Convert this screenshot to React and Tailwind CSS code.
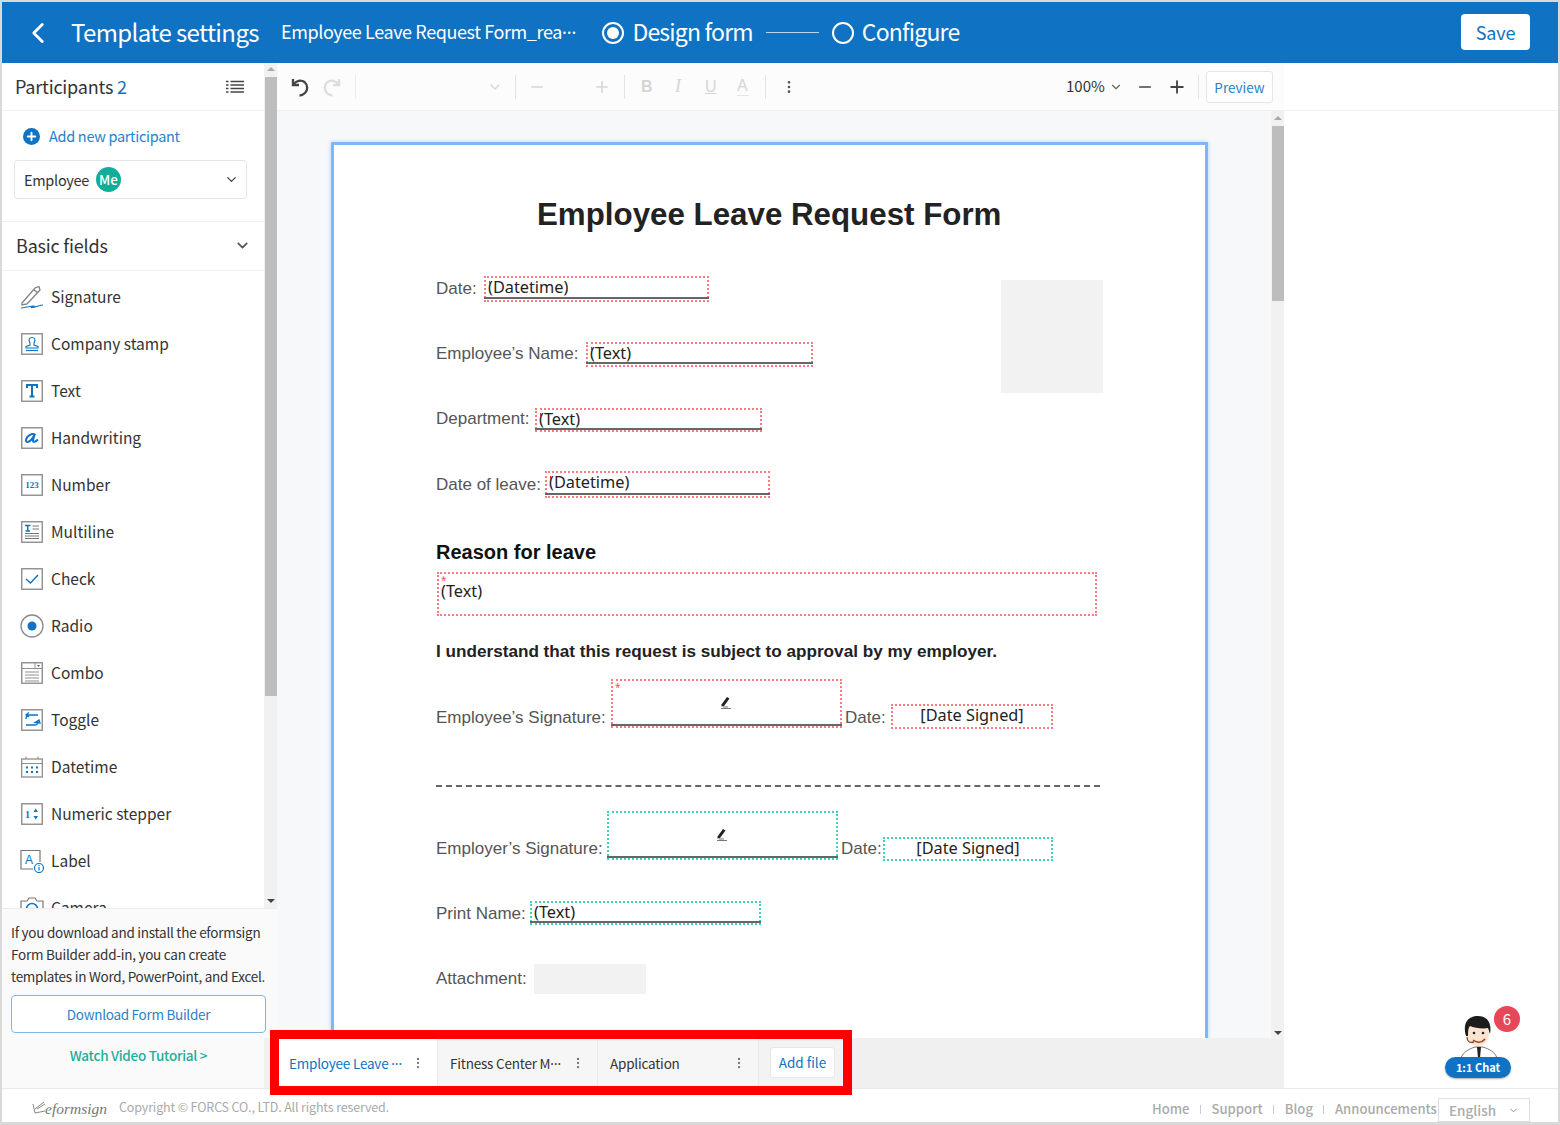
import React from "react";
import { ChevronDown, ChevronLeft, Plus, Minus, EllipsisVertical } from "lucide-react";

const BLUE = "#0f72c2";

function Box({ children, size = 22 }) {
  return (
    <svg width={size} height={size} viewBox="0 0 22 22" fill="none">
      <rect x="0.75" y="0.75" width="20.5" height="20.5" stroke="#8f8f8f" strokeWidth="1.4" />
      {children}
    </svg>
  );
}

const fields = [
  {
    name: "Signature",
    icon: (
      <svg width="24" height="24" viewBox="0 0 24 24" fill="none">
        <path d="M2 18 L15 3 L19 1.500 L20 5 L7 19 L2 20 Z M14 5 L18 8" stroke="#808080" strokeWidth="1.300" />
        <path d="M1 23 C7 22 12 21 14 21 C15 21 9 23 12 22.500 C16 22 20 20 23 20" stroke={BLUE} strokeWidth="1.100" />
      </svg>
    ),
  },
  {
    name: "Company stamp",
    icon: (
      <Box>
        <path d="M9 10 C7 6 8.500 4.500 11 4.500 C13.500 4.500 15 6 13 10 L13 12 L17 13.500 L17 15 L5 15 L5 13.500 L9 12 Z" stroke={BLUE} strokeWidth="1.100" />
        <path d="M5 17.500 L17 17.500" stroke={BLUE} strokeWidth="1.200" />
      </Box>
    ),
  },
  {
    name: "Text",
    icon: (
      <Box>
        <path d="M6 8 L6 5 L16 5 L16 8 M11 5 L11 16.500 M8.500 16.500 L13.500 16.500" stroke={BLUE} strokeWidth="2" />
      </Box>
    ),
  },
  {
    name: "Handwriting",
    icon: (
      <Box>
        <path d="M14.500 8 C11 5.500 5.500 9 5 13 C4.700 16 8 15.500 10.500 12.500 L13.500 8 L12 13 C11.500 15.500 14 15.500 17 12.500" stroke={BLUE} strokeWidth="2" />
      </Box>
    ),
  },
  {
    name: "Number",
    icon: (
      <Box>
        <text x="11" y="14" textAnchor="middle" fontSize="9" fontWeight="700" fontFamily="Liberation Serif, serif" fill={BLUE}>123</text>
      </Box>
    ),
  },
  {
    name: "Multiline",
    icon: (
      <Box>
        <path d="M4 4.500 L9.500 4.500 M6.700 4.500 L6.700 10 M4.500 10 L9 10" stroke={BLUE} strokeWidth="1.500" />
        <path d="M11.500 5 L18 5 M11.500 8 L18 8 M4 12.500 L18 12.500 M4 15 L18 15 M4 17.500 L18 17.500" stroke="#777" strokeWidth="1" />
      </Box>
    ),
  },
  {
    name: "Check",
    icon: (
      <Box>
        <path d="M5 11 L9.500 15 L17 7" stroke={BLUE} strokeWidth="1.400" />
      </Box>
    ),
  },
  {
    name: "Radio",
    icon: (
      <svg width="24" height="24" viewBox="0 0 24 24" fill="none">
        <circle cx="12" cy="12" r="11" stroke="#8a8a8a" strokeWidth="1.300" />
        <circle cx="12" cy="12" r="4.500" fill={BLUE} />
      </svg>
    ),
  },
  {
    name: "Combo",
    icon: (
      <Box>
        <path d="M1 6.500 L21 6.500 M14 1 L14 6.500 M4 10 L18 10 M4 13 L18 13 M4 16 L18 16 M4 19 L18 19" stroke="#8f8f8f" strokeWidth="1" />
        <path d="M16 3 L19 3 L17.500 5 Z" fill={BLUE} />
      </Box>
    ),
  },
  {
    name: "Toggle",
    icon: (
      <Box>
        <path d="M5 10 C5 7 6 6 8 6 L17 6 M8 3.500 L5 6 L8 8" stroke={BLUE} strokeWidth="1.300" />
        <path d="M17 12 C17 15 16 16 14 16 L5 16 M14 13.500 L18 11 L19 14 Z" stroke={BLUE} strokeWidth="1.300" />
      </Box>
    ),
  },
  {
    name: "Datetime",
    icon: (
      <svg width="22" height="22" viewBox="0 0 22 22" fill="none">
        <rect x="0.700" y="3" width="20.600" height="18" stroke="#8f8f8f" strokeWidth="1.300" />
        <path d="M0.700 7.500 L21.300 7.500 M5 0.500 L5 3 M17 0.500 L17 3" stroke="#8f8f8f" strokeWidth="1.100" />
        <path d="M5 11.500 L7 11.500 M10 11.500 L12 11.500 M15 11.500 L17 11.500 M5 16 L7 16 M10 16 L12 16 M15 16 L17 16" stroke={BLUE} strokeWidth="2" />
      </svg>
    ),
  },
  {
    name: "Numeric stepper",
    icon: (
      <Box>
        <text x="6.500" y="15" textAnchor="middle" fontSize="10" fontWeight="700" fontFamily="Liberation Serif, serif" fill={BLUE}>1</text>
        <path d="M12.500 9 L17 9 L14.750 5.500 Z M12.500 13 L17 13 L14.750 16.500 Z" fill={BLUE} />
      </Box>
    ),
  },
  {
    name: "Label",
    icon: (
      <svg width="24" height="24" viewBox="0 0 24 24" fill="none">
        <path d="M20 13 L20 1.500 L1 1.500 L1 20 L13 20" stroke="#777" strokeWidth="1.200" />
        <text x="5" y="15" fontSize="12" fontFamily="Liberation Sans, sans-serif" fill={BLUE}>A</text>
        <circle cx="19" cy="19" r="4.500" stroke={BLUE} strokeWidth="1.200" fill="#fff" />
        <path d="M19 18 L19 21.500 M19 16 L19 17" stroke={BLUE} strokeWidth="1.200" />
      </svg>
    ),
  },
];

function Pen({ className }) {
  return (
    <svg className={className} width="14" height="14" viewBox="0 0 14 14" fill="none">
      <path d="M2.500 8.500 L8 1 L10.500 2.500 L5 10 L2.500 10.500 Z" fill="#222" />
      <path d="M2 12.500 L12 12.500 M4 11 L9 11" stroke="#777" strokeWidth="1.200" />
    </svg>
  );
}

function Label({ x, y, children }) {
  return (
    <div className="absolute whitespace-nowrap [font-family:Liberation_Sans,sans-serif] text-[17px] leading-[22px] text-[#555]" style={{ left: x, top: y }}>
      {children}
    </div>
  );
}

function Field({ x, y, w, h, color = "red", text, center, line, req, mark, pt = 0 }) {
  const border = color === "red" ? "border-[#f97c85]" : "border-[#45cdc0]";
  return (
    <div
      className={`absolute border-2 border-dotted ${border} ${center ? "text-center" : "pl-[2px]"} [font-family:Noto_Sans,sans-serif] text-[16.300px] leading-[18px] text-[#222]`}
      style={{ left: x, top: y, width: w, height: h, paddingTop: pt }}
    >
      {req && <span className="absolute left-[2px] top-[1px] text-[10px] leading-[10px] text-[#f4525f]">*</span>}
      {mark && <span className="absolute left-[3px] top-[3px] h-[4px] w-px bg-[#e02030]" />}
      {text}
      {line && <div className="absolute -left-[2px] -right-[2px] h-[2px] bg-[#666]" style={{ top: line }} />}
    </div>
  );
}

function Dots() {
  return <span className="[font-family:Noto_Sans,sans-serif] tracking-normal">···</span>;
}

function Tab({ name, dots, active, w, pl }) {
  return (
    <div className={`flex h-full items-center justify-between pr-[12px] border-r border-[#ececec] ${pl} ${active ? "bg-white text-[#0f72c2]" : "bg-[#f6f6f6] text-[#333]"}`} style={{ width: w }}>
      <span className="whitespace-nowrap pt-[2px] text-[13.500px] tracking-[-0.2px]">{name}{dots && <Dots />}</span>
      <EllipsisVertical size={14} className="text-[#777]" />
    </div>
  );
}

export default function App() {
  return (
    <div className="relative h-[1125px] w-[1560px] overflow-hidden bg-white [font-family:Noto_Sans_CJK_KR,Noto_Sans,sans-serif] text-[#333]">
      {/* header */}
      <div className="absolute left-[2px] right-0 top-[2px] flex h-[61px] items-center bg-[#0f72c2] text-white">
        <ChevronLeft size={34} strokeWidth={2} className="ml-[19px]" />
        <span className="mb-[2px] ml-[16px] text-[24px] leading-none tracking-[-0.6px]">Template settings</span>
        <span className="mb-[2px] ml-[22px] text-[18px] leading-none tracking-[-0.4px]">Employee Leave Request Form_rea<Dots /></span>
        <span className="ml-[26px] flex h-[22px] w-[22px] items-center justify-center rounded-full border-2 border-white">
          <span className="h-[12px] w-[12px] rounded-full bg-white" />
        </span>
        <span className="mb-[2px] ml-[8px] text-[23px] leading-none tracking-[-0.8px]">Design form</span>
        <span className="ml-[13px] h-px w-[53px] bg-[#b9d8f0]" />
        <span className="ml-[13px] h-[22px] w-[22px] rounded-full border-2 border-white" />
        <span className="mb-[2px] ml-[8px] text-[23px] leading-none tracking-[-0.8px]">Configure</span>
        <button className="absolute left-[1459px] top-[12px] h-[36px] w-[69px] rounded-[4px] bg-white text-[18px] tracking-[-0.2px] text-[#0f72c2]">Save</button>
      </div>

      {/* sidebar */}
      <div className="absolute left-[2px] top-[63px] h-[846px] w-[262px] overflow-hidden bg-white">
        <div className="flex h-[48px] items-center justify-between border-b border-[#efefef] pl-[13px] pr-[20px]">
          <span className="text-[18px] tracking-[-0.2px]">Participants <span className="text-[#0f72c2]">2</span></span>
          <svg width="18" height="14" viewBox="0 0 18 14" fill="none" stroke="#444" strokeWidth="1.600">
            <path d="M0 1.500 L2.500 1.500 M0 5 L2.500 5 M0 8.500 L2.500 8.500 M0 12 L2.500 12 M4.500 1.500 L18 1.500 M4.500 5 L18 5 M4.500 8.500 L18 8.500 M4.500 12 L18 12" />
          </svg>
        </div>
        <div className="mt-[15px] flex items-center pl-[21px]">
          <span className="flex h-[17px] w-[17px] items-center justify-center rounded-full bg-[#0f72c2] text-white">
            <Plus size={13} strokeWidth={3.500} />
          </span>
          <span className="ml-[9px] text-[14.500px] leading-[20px] tracking-[-0.3px] text-[#2a7fc9]">Add new participant</span>
        </div>
        <div className="relative ml-[12px] mt-[14px] flex h-[39px] w-[233px] items-center rounded-[3px] border border-[#e6e6e6] pl-[9px]">
          <span className="text-[14.500px] tracking-[-0.3px]">Employee</span>
          <span className="ml-[7px] flex h-[25px] w-[25px] items-center justify-center rounded-full bg-[#10ae98] text-[13.500px] font-medium text-white">Me</span>
          <ChevronDown size={15} className="absolute right-[7px] top-[11px] text-[#444]" />
        </div>
        <div className="mt-[22px] flex h-[50px] items-center justify-between border-y border-[#efefef] pb-[2px] pl-[14px] pr-[13px]">
          <span className="text-[18px] tracking-[-0.2px]">Basic fields</span>
          <ChevronDown size={17} strokeWidth={2.400} className="text-[#555]" />
        </div>
        <div className="flex flex-col pl-[18px] pt-[2px]">
          {fields.map((f) => (
            <div key={f.name} className="flex h-[47px] items-center">
              <span className="flex w-[24px] justify-center">{f.icon}</span>
              <span className="ml-[7px] text-[15.500px] text-[#333]">{f.name}</span>
            </div>
          ))}
          <div className="flex h-[47px] items-center">
            <svg width="24" height="24" viewBox="0 0 24 24" fill="none">
              <path d="M1 23 L1 5 L7 5 L9 2 L15 2 L17 5 L23 5 L23 23 Z" stroke="#777" strokeWidth="1.200" />
              <circle cx="12" cy="13" r="5.500" stroke={BLUE} strokeWidth="1.500" />
            </svg>
            <span className="ml-[7px] text-[15.500px] text-[#333]">Camera</span>
          </div>
        </div>
      </div>

      {/* sidebar scrollbar */}
      <div className="absolute left-[264px] top-[63px] h-[845px] w-[13px] bg-[#f1f1f1]">
        <div className="absolute left-[1px] top-[14px] h-[619px] w-[12px] bg-[#bdbdbd]" />
        <div className="absolute left-[3px] top-[4px] h-0 w-0 border-x-[4px] border-b-[4px] border-x-transparent border-b-[#aaa]" />
        <div className="absolute bottom-[5px] left-[3px] h-0 w-0 border-x-[4px] border-t-[4px] border-x-transparent border-t-[#444]" />
      </div>

      {/* form builder promo */}
      <div className="absolute left-[2px] top-[908px] h-[180px] w-[277px] border-t border-[#ececec] bg-[#fafafa]">
        <p className="whitespace-nowrap pl-[9px] pt-[12px] text-[13.500px] leading-[22px] tracking-[-0.25px] text-[#333]">
          If you download and install the eformsign<br />Form Builder add-in, you can create<br />templates in Word, PowerPoint, and Excel.
        </p>
        <button className="absolute left-[9px] top-[86px] h-[38px] w-[255px] rounded-[4px] border border-[#7db7e8] bg-white text-[13.500px] tracking-[-0.28px] text-[#2a7fc9]">Download Form Builder</button>
        <div className="absolute left-0 top-[136px] w-[273px] text-center text-[13.500px] font-medium tracking-[-0.28px] text-[#1fae9a]">Watch Video Tutorial &gt;</div>
      </div>

      {/* toolbar */}
      <div className="absolute left-[277px] top-[63px] flex h-[48px] w-[1007px] items-center border-b border-[#efefef] bg-[#fcfcfc]">
        <svg className="ml-[12px]" width="22" height="22" viewBox="0 0 22 22" fill="none" stroke="#444" strokeWidth="2.300">
          <path d="M4 3 L4 9 L10 9" />
          <path d="M4.500 8.500 C7 4.500 12 3.500 15.500 6 C19 9 19 14 16 17 C14.500 18.500 12.500 19.500 10.500 19.500" />
        </svg>
        <svg className="ml-[10px]" width="22" height="22" viewBox="0 0 22 22" fill="none" stroke="#ddd" strokeWidth="2.300">
          <path d="M18 3 L18 9 L12 9" />
          <path d="M17.500 8.500 C15 4.500 10 3.500 6.500 6 C3 9 3 14 6 17 C7.500 18.500 9.500 19.500 11.500 19.500" />
        </svg>
        <span className="ml-[12px] h-[24px] w-px bg-[#eee]" />
        <ChevronDown size={16} className="ml-[131px] text-[#d5d5d5]" />
        <span className="ml-[12px] h-[24px] w-px bg-[#e4e4e4]" />
        <Minus size={18} className="ml-[12px] text-[#d5d5d5]" />
        <Plus size={18} className="ml-[47px] text-[#d5d5d5]" />
        <span className="ml-[13px] h-[24px] w-px bg-[#e4e4e4]" />
        <span className="ml-[16px] w-[12px] [font-family:Liberation_Sans,sans-serif] text-[16px] font-bold text-[#d5d5d5]">B</span>
        <span className="ml-[22px] w-[8px] [font-family:Liberation_Serif,serif] text-[18px] italic text-[#d5d5d5]">I</span>
        <span className="ml-[22px] w-[12px] [font-family:Liberation_Sans,sans-serif] text-[16px] text-[#d5d5d5] underline">U</span>
        <span className="ml-[20px] w-[12px] border-b border-[#e4e4e4] [font-family:Liberation_Sans,sans-serif] text-[16px] leading-[18px] text-[#d5d5d5]">A</span>
        <span className="ml-[16px] h-[24px] w-px bg-[#e4e4e4]" />
        <EllipsisVertical size={16} className="ml-[15px] text-[#555]" />
        <span className="absolute left-[789px] text-[15px] text-[#333]">100%</span>
        <ChevronDown size={14} className="absolute left-[832px] top-[17px] text-[#666]" />
        <Minus size={18} strokeWidth={2.200} className="absolute left-[859px] top-[15px] text-[#444]" />
        <Plus size={20} strokeWidth={2.200} className="absolute left-[890px] top-[14px] text-[#444]" />
        <span className="absolute left-[921px] top-[12px] h-[24px] w-px bg-[#e4e4e4]" />
        <button className="absolute left-[929px] top-[8px] h-[32px] w-[67px] rounded-[3px] border border-[#e6e6e6] bg-white text-[13.500px] text-[#2a7fc9]">Preview</button>
      </div>
      <div className="absolute left-[1284px] top-[110px] h-px w-[276px] bg-[#f0f0f0]" />

      {/* canvas */}
      <div className="absolute left-[277px] top-[111px] h-[927px] w-[994px] overflow-hidden bg-[#f7f8fa]">
        <div className="absolute left-[54px] top-[31px] h-[1000px] w-[877px] border-[3px] border-b-0 border-[#7ab8fb] bg-white shadow-[0_0_4px_#a9d2ff]" />
      </div>
      <div className="absolute left-[1271px] top-[111px] h-[927px] w-[13px] bg-[#f1f1f1]">
        <div className="absolute left-[1px] top-[15px] h-[175px] w-[12px] bg-[#bdbdbd]" />
        <div className="absolute left-[3px] top-[5px] h-0 w-0 border-x-[4px] border-b-[4px] border-x-transparent border-b-[#aaa]" />
        <div className="absolute bottom-[3px] left-[3px] h-0 w-0 border-x-[4px] border-t-[4px] border-x-transparent border-t-[#444]" />
      </div>

      {/* form */}
      <div className="absolute left-0 top-0 h-[1038px] w-[1270px] overflow-hidden">
        <h1 className="absolute left-[537px] top-[196px] whitespace-nowrap [font-family:Liberation_Sans,sans-serif] text-[31.300px] font-bold leading-[38px] text-[#222]">Employee Leave Request Form</h1>

        <Label x={436} y={278}>Date:</Label>
        <Field x={484} y={276} w={225} h={26} text="(Datetime)" line={19} mark />
        <Label x={436} y={343}>Employee’s Name:</Label>
        <Field x={586} y={342} w={227} h={25} text="(Text)" line={18} mark />
        <Label x={436} y={408}>Department:</Label>
        <Field x={535} y={408} w={227} h={24} text="(Text)" line={18} mark />
        <Label x={436} y={474}>Date of leave:</Label>
        <Field x={545} y={471} w={225} h={27} text="(Datetime)" line={20} mark />
        <div className="absolute left-[1001px] top-[280px] h-[113px] w-[102px] bg-[#f2f2f2]" />

        <div className="absolute left-[436px] top-[540px] whitespace-nowrap [font-family:Liberation_Sans,sans-serif] text-[20px] font-bold leading-[24px] text-[#111]">Reason for leave</div>
        <Field x={437} y={572} w={660} h={44} text="(Text)" req pt={8} />
        <div className="absolute left-[436px] top-[640px] whitespace-nowrap [font-family:Liberation_Sans,sans-serif] text-[17.150px] font-bold leading-[22px] text-[#222]">I understand that this request is subject to approval by my employer.</div>

        <Label x={436} y={707}>Employee’s Signature:</Label>
        <Field x={611} y={679} w={231} h={49} req line={43} />
        <Pen className="absolute left-[719px] top-[696px]" />
        <Label x={845} y={707}>Date:</Label>
        <Field x={891} y={704} w={162} h={25} center text="[Date Signed]" />

        <div className="absolute left-[436px] top-[785px] w-[664px] border-t-2 border-dashed border-[#666]" />

        <Label x={436} y={838}>Employer’s Signature:</Label>
        <Field x={607} y={811} w={231} h={49} color="green" line={43} />
        <Pen className="absolute left-[715px] top-[828px]" />
        <Label x={841} y={838}>Date:</Label>
        <Field x={883} y={837} w={170} h={24} color="green" center text="[Date Signed]" />

        <Label x={436} y={903}>Print Name:</Label>
        <Field x={530} y={901} w={231} h={24} color="green" text="(Text)" line={18} />
        <Label x={436} y={968}>Attachment:</Label>
        <div className="absolute left-[534px] top-[964px] h-[30px] w-[112px] bg-[#f2f2f2]" />
      </div>

      {/* footer */}
      <div className="absolute left-[2px] right-0 top-[1088px] h-[35px] border-t border-[#e8e8e8] bg-white">
        <span className="absolute left-[30px] top-[8px] [font-family:Liberation_Serif,serif] text-[15.500px] italic text-[#777]">
          <svg className="mr-[-1px] inline-block align-[-1px]" width="14" height="14" viewBox="0 0 14 14" fill="none" stroke="#888">
            <path d="M1 3 L3 12 L13 10 M3 8 L12 1 M5 8 L13 3" />
          </svg>
          eformsign
        </span>
        <span className="absolute left-[117px] top-[9px] text-[12.500px] leading-[18px] tracking-[-0.15px] text-[#aaa]">Copyright © FORCS CO., LTD. All rights reserved.</span>
        <div className="absolute left-[1150px] top-[10px] flex items-center text-[13.100px] font-medium leading-[20px] text-[#aaa]">
          <span>Home</span>
          <span className="mx-[10.500px] h-[9px] w-px bg-[#ccc]" />
          <span>Support</span>
          <span className="mx-[10.500px] h-[9px] w-px bg-[#ccc]" />
          <span>Blog</span>
          <span className="mx-[10.500px] h-[9px] w-px bg-[#ccc]" />
          <span>Announcements</span>
        </div>
        <div className="absolute left-[1436px] top-[9px] flex h-[24px] w-[92px] items-center justify-between border border-[#ddd] pl-[10px] pr-[10px] text-[13.500px] font-medium text-[#aaa]">
          English
          <ChevronDown size={11} className="text-[#888]" />
        </div>
      </div>

      {/* file tabs */}
      <div className="absolute left-[264px] top-[1038px] h-[50px] w-[1020px] bg-[#f0f0f0]" />
      <div className="absolute left-[270px] top-[1030px] flex h-[65px] w-[582px] items-center border-[9px] border-[#ff0000] bg-[#f3f3f3]">
        <Tab name="Employee Leave " dots active w={159} pl="pl-[10px]" />
        <Tab name="Fitness Center M" dots w={160} pl="pl-[12px]" />
        <Tab name="Application" w={161} pl="pl-[12px]" />
        <button className="ml-[11px] h-[31px] w-[65px] rounded-[3px] border border-[#e8e8e8] bg-white text-[13.500px] text-[#0f72c2]">Add file</button>
      </div>

      {/* chat */}
      <div className="absolute left-[1445px] top-[1006px] h-[74px] w-[80px]">
        <svg className="absolute left-[12px] top-[8px]" width="44" height="44" viewBox="0 0 44 44" fill="none">
          <path d="M4 44 C6 38 12 35 18 33 L26 33 C32 35 38 38 40 44 Z" fill="#fff" stroke="#555" strokeWidth="0.800" />
          <path d="M20 33 L24 33 L23 44 L21 44 Z" fill="#222" />
          <ellipse cx="21" cy="20" rx="11" ry="12" fill="#fbe3cf" />
          <path d="M9 22 C5 8 12 2 21 2 C31 2 35 10 33 20 L31 14 C26 15 17 14 13 12 C11 14 11 18 11 22 Z" fill="#1c1c1c" />
          <circle cx="17" cy="19" r="1.300" fill="#222" />
          <circle cx="26" cy="19" r="1.300" fill="#222" />
          <path d="M16 26 C20 29 25 29 28 25" stroke="#9b3d2a" strokeWidth="1.500" />
          <path d="M10 23 C10 28 13 29 17 28" stroke="#7a4a1d" strokeWidth="1.300" />
        </svg>
        <span className="absolute left-[49px] top-0 flex h-[26px] w-[26px] items-center justify-center rounded-full bg-[#e8475a] text-[15px] text-white">6</span>
        <span className="absolute bottom-[2px] left-0 flex h-[21px] w-[66px] items-center justify-center rounded-[11px] bg-[#0f72c2] text-[11px] font-bold text-white shadow-[0_1px_2px_#0005]">1:1 Chat</span>
      </div>

      {/* outer frame */}
      <div className="pointer-events-none absolute inset-0 border-2 border-b-[3px] border-[#d9d9d9]" />
    </div>
  );
}
